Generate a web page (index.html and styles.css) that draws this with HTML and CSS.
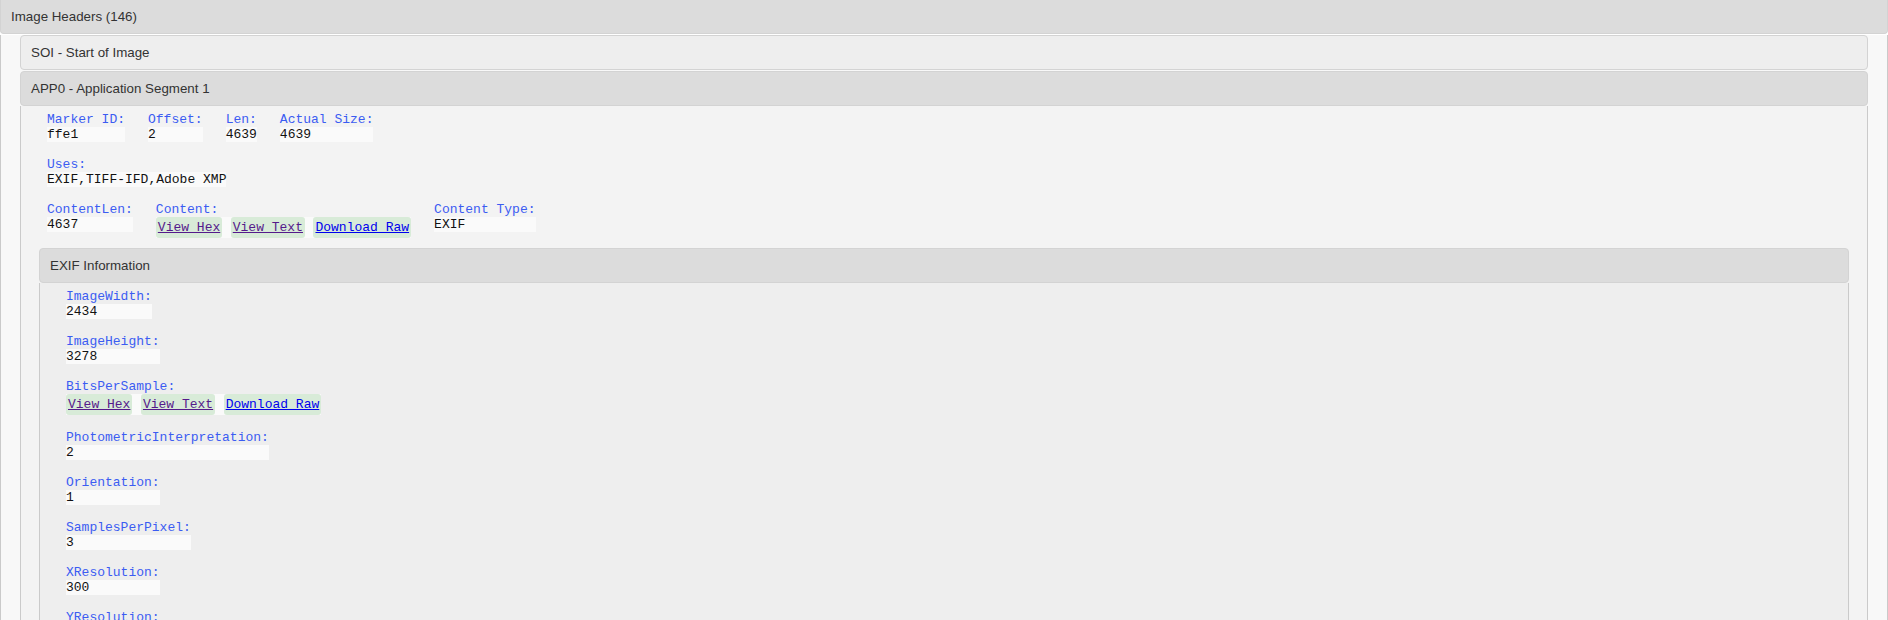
FILE: index.html
```html
<!DOCTYPE html>
<html>
<head>
<meta charset="utf-8">
<title>Image Headers</title>
<link rel="stylesheet" href="styles.css">
</head>
<body>
<div class="panel outer">
  <div class="hdr hdr-dark hdr-top">Image Headers (146)</div>
  <div class="pbody pbody-outer">
    <div class="panel">
      <div class="hdr hdr-light">SOI - Start of Image</div>
    </div>
    <div class="panel">
      <div class="hdr hdr-dark">APP0 - Application Segment 1</div>
      <div class="pbody pbody-app">
        <div class="row">
          <div class="field"><div class="lbl">Marker ID:</div><div class="val">ffe1</div></div>
          <div class="field"><div class="lbl">Offset:</div><div class="val">2</div></div>
          <div class="field"><div class="lbl">Len:</div><div class="val">4639</div></div>
          <div class="field"><div class="lbl">Actual Size:</div><div class="val">4639</div></div>
        </div>
        <div class="row">
          <div class="field"><div class="lbl">Uses:</div><div class="val">EXIF,TIFF-IFD,Adobe XMP</div></div>
        </div>
        <div class="row row-last">
          <div class="field"><div class="lbl">ContentLen:</div><div class="val">4637</div></div>
          <div class="field"><div class="lbl">Content:</div>
            <div class="btns">
              <span class="btn"><a href="#hex" class="visited">View Hex</a></span>
              <span class="btn"><a href="#text" class="visited">View Text</a></span>
              <span class="btn"><a href="#raw" class="link">Download Raw</a></span>
            </div>
          </div>
          <div class="field"><div class="lbl">Content Type:</div><div class="val">EXIF</div></div>
        </div>
        <div class="panel">
          <div class="hdr hdr-dark">EXIF Information</div>
          <div class="pbody pbody-exif">
            <div class="row"><div class="field"><div class="lbl">ImageWidth:</div><div class="val">2434</div></div></div>
            <div class="row"><div class="field"><div class="lbl">ImageHeight:</div><div class="val">3278</div></div></div>
            <div class="row"><div class="field"><div class="lbl">BitsPerSample:</div>
              <div class="btns">
                <span class="btn"><a href="#hex2" class="visited">View Hex</a></span>
                <span class="btn"><a href="#text2" class="visited">View Text</a></span>
                <span class="btn"><a href="#raw2" class="link">Download Raw</a></span>
              </div>
            </div></div>
            <div class="row"><div class="field"><div class="lbl">PhotometricInterpretation:</div><div class="val">2</div></div></div>
            <div class="row"><div class="field"><div class="lbl">Orientation:</div><div class="val">1</div></div></div>
            <div class="row"><div class="field"><div class="lbl">SamplesPerPixel:</div><div class="val">3</div></div></div>
            <div class="row"><div class="field"><div class="lbl">XResolution:</div><div class="val">300</div></div></div>
            <div class="row"><div class="field"><div class="lbl">YResolution:</div><div class="val">300</div></div></div>
          </div>
        </div>
      </div>
    </div>
  </div>
</div>
</body>
</html>
```

FILE: styles.css
```css
html, body {
  margin: 0;
  padding: 0;
  height: 620px;
  overflow: hidden;
}

body {
  background: #ffffff;
  font-family: "Liberation Sans", Arial, sans-serif;
  font-size: 13.33px;
}

.hdr {
  padding: 9px 10px;
  line-height: 15px;
  border: 1px solid #d3d3d3;
  border-radius: 4px;
  color: #333333;
}

.hdr-top {
  border-top: 0;
  border-radius: 0 0 4px 4px;
}

.hdr-dark {
  background: #dcdcdc;
}

.hdr-light {
  background: #eeeeee;
}

.pbody {
  border: 1px solid #cacaca;
  border-top: 0;
}

.pbody-outer {
  background: #f8f8f8;
  padding: 0 19px;
}

.pbody-outer > .panel {
  margin-top: 1px;
}

.pbody-app {
  background: #f3f3f3;
  padding: 6px 18px 0;
}

.pbody-exif {
  background: #eeeeee;
  padding: 6px 18px 0;
}

.row {
  display: flex;
  align-items: flex-start;
  gap: 23px;
  margin: 0 0 15px 8px;
}

.row-last {
  margin-bottom: 10px;
}

.field {
  display: flex;
  flex-direction: column;
}

.lbl,
.val,
.btn {
  font-family: "Liberation Mono", "Courier New", monospace;
  font-size: 13px;
  line-height: 15px;
  white-space: pre;
}

.lbl {
  color: #3b5cf2;
}

.val {
  color: #111111;
  background: #fafafa;
}

.btns {
  display: flex;
  gap: 8.5px;
  background: #fafafa;
}

.btn {
  background: #d8ebd8;
  padding: 3px 2px;
  border-radius: 3px;
}

.btn a {
  text-decoration: underline;
}

.btn a.visited {
  color: #551a8b;
}

.btn a.link {
  color: #0000ee;
}
```
